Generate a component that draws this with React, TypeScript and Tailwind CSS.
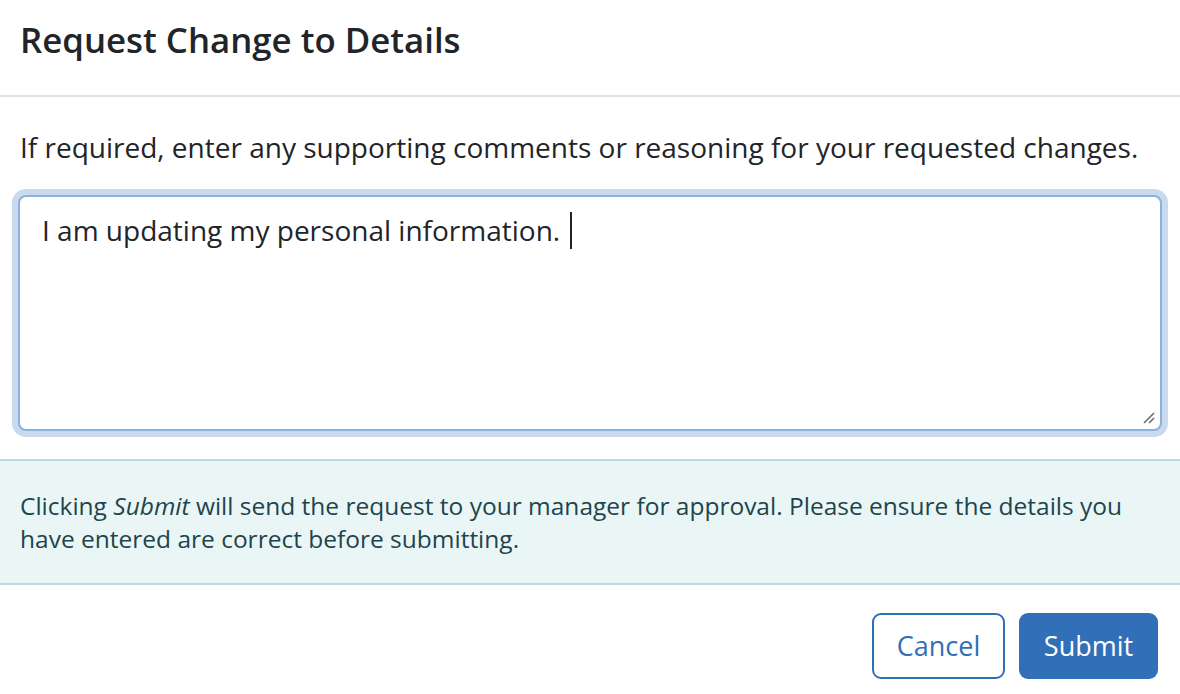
import React from "react";

export default function App() {
  return (
    <div
      className="w-[1180px] h-[694px] bg-white text-[#212529] overflow-hidden"
      style={{ fontFamily: '"Open Sans", "Noto Sans", sans-serif' }}
    >
      <div className="h-[97px] flex items-center px-5 border-b-[2px] border-[#dee2e6]">
        <h1 className="text-[34.8px] font-semibold leading-none -mt-[14px]">Request Change to Details</h1>
      </div>
      <div className="px-[18px] pt-[30px]">
        <p className="text-[28px] leading-[40px] pl-[2px]">
          If required, enter any supporting comments or reasoning for your requested changes.
        </p>
        <div className="mt-[22px] -mx-[6px] p-[6px] rounded-[14px] bg-[#c9d9ee]">
          <div className="relative h-[236px] rounded-[8px] border-[2px] border-[#8cb1da] bg-white px-[22px] pt-[13px]">
            <div className="text-[28px] leading-[40px] flex items-center">
              <span>I am updating my personal information.</span>
              <span className="inline-block w-[2px] h-[37px] bg-[#212529] ml-[10px]" />
            </div>
            <svg className="absolute right-[4px] bottom-[4px]" width="14" height="14" viewBox="0 0 14 14">
              <line x1="2" y1="12" x2="12" y2="2" stroke="#6b6b6b" strokeWidth="1.6" />
              <line x1="7" y1="12" x2="12" y2="7" stroke="#6b6b6b" strokeWidth="1.6" />
            </svg>
          </div>
        </div>
      </div>
      <div className="mt-[22px] h-[126px] bg-[#eaf6f6] border-y-[2px] border-[#b3dde3] px-5 flex items-center">
        <p className="text-[24.5px] leading-[33px] text-[#1d454d]">
          Clicking <em>Submit</em> will send the request to your manager for approval. Please ensure the details you have entered are correct before submitting.
        </p>
      </div>
      <div className="flex justify-end gap-[14px] pr-[22px] pt-[28px]">
        <button className="h-[66px] w-[133px] rounded-[9px] border-[2px] border-[#3170b9] bg-white text-[#3170b9] text-[27px]">
          Cancel
        </button>
        <button className="h-[66px] w-[139px] rounded-[9px] bg-[#3170b9] text-white text-[27px]">
          Submit
        </button>
      </div>
    </div>
  );
}
